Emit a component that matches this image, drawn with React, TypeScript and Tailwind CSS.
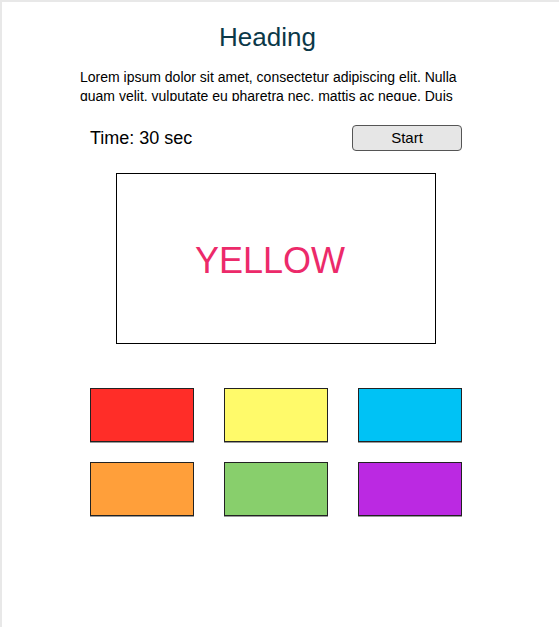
const swatches = [
  "bg-[#ff2d28]",
  "bg-[#fffa6a]",
  "bg-[#00c2f5]",
  "bg-[#ff9f3a]",
  "bg-[#88cf6c]",
  "bg-[#bb29e2]",
];

export default function App() {
  return (
    <div className="min-h-[627px] border-l-2 border-t-2 border-[#e8e8e8] bg-white font-['Liberation_Sans',Arial,sans-serif] text-black">
      <h1 className="pt-[20px] pr-[26px] text-center text-[26px] leading-[30px] text-[#0b3848]">
        Heading
      </h1>

      <p className="ml-[78px] mt-[16px] h-[33px] w-[390px] overflow-hidden text-[14px] leading-[19px]">
        Lorem ipsum dolor sit amet, consectetur adipiscing elit. Nulla quam
        velit, vulputate eu pharetra nec, mattis ac neque. Duis vulputate
        commodo lectus, ac blandit elit tincidunt id.
      </p>

      <div className="ml-[88px] mt-[24px] flex w-[372px] items-center justify-between">
        <span className="text-[18px] leading-[26px]">Time: 30 sec</span>
        <button className="h-[26px] w-[110px] rounded-[4px] border border-[#555] bg-[#e6e6e6] text-[15px] leading-[22px]">
          Start
        </button>
      </div>

      <div className="ml-[114px] mt-[22px] flex h-[171px] w-[320px] items-center justify-center border border-black">
        <span className="pr-[12px] pt-[4px] text-[36px] leading-[40px] text-[#ec2a6a]">
          YELLOW
        </span>
      </div>

      <div className="ml-[88px] mt-[44px] grid w-[372px] grid-cols-3 gap-x-[30px] gap-y-[20px]">
        {swatches.map((color) => (
          <div
            key={color}
            className={`h-[54px] w-[104px] border border-[#222] shadow-[0_1px_0_#999] ${color}`}
          />
        ))}
      </div>
    </div>
  );
}
